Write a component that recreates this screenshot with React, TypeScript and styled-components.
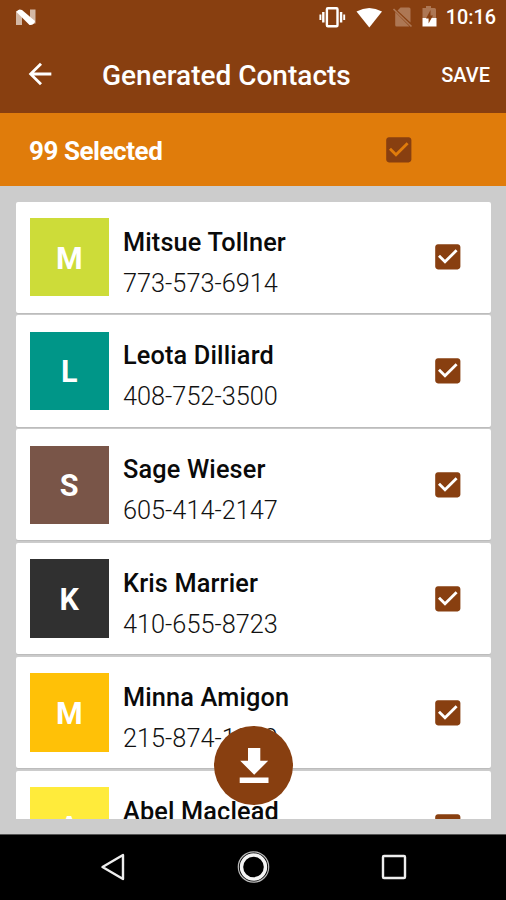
import React from "react";
import styled, { createGlobalStyle } from "styled-components";

const brown = "#883f10";
const faded = "#ad7754";

const GlobalStyle = createGlobalStyle`
  * { box-sizing: border-box; }
  body { margin: 0; background: #000; font-family: Roboto, "Liberation Sans", sans-serif; }
  svg { display: block; flex: none; }
`;

const Screen = styled.div`
  position: relative;
  display: flex;
  flex-direction: column;
  width: 506px;
  height: 900px;
  overflow: hidden;
  background: #ccc;
`;

const StatusBar = styled.div`
  flex: none;
  display: flex;
  align-items: center;
  justify-content: space-between;
  height: 34px;
  padding: 0 10px 0 15px;
  background: ${brown};
`;

const StatusIcons = styled.div`
  display: flex;
  align-items: center;
`;

const Clock = styled.span`
  margin-left: 9px;
  padding-top: 2px;
  font-size: 19.8px;
  line-height: 24px;
  font-weight: 500;
  color: #fff;
`;

const Toolbar = styled.header`
  flex: none;
  display: flex;
  align-items: center;
  height: 79px;
  padding: 0 16px 0 23px;
  background: ${brown};
  color: #fff;
`;

const Title = styled.h1`
  flex: 1;
  margin: 5px 0 0 45px;
  font-size: 28px;
  line-height: 34px;
  font-weight: 500;
  white-space: nowrap;
`;

const SaveButton = styled.button`
  margin: 3px 0 0;
  padding: 0;
  border: 0;
  background: none;
  color: #fff;
  font: 500 20px/24px Roboto, sans-serif;
`;

const SelectionBar = styled.div`
  flex: none;
  display: flex;
  align-items: center;
  justify-content: space-between;
  height: 72.5px;
  padding: 2px 90px 0 29px;
  background: #e07c0b;
`;

const SelectionCount = styled.span`
  padding-top: 2px;
  font-size: 26px;
  line-height: 32px;
  font-weight: 700;
  letter-spacing: -0.45px;
  color: #fff;
`;

const List = styled.main`
  flex: none;
  display: flex;
  flex-direction: column;
  gap: 2.7px;
  height: 617.5px;
  margin: 16px 15px 15px 16px;
  overflow: hidden;
`;

const Card = styled.article`
  flex: none;
  display: flex;
  align-items: center;
  height: 111.2px;
  padding: 0 26.5px 0 14px;
  border-radius: 2px;
  background: #fff;
  box-shadow: 0 1px 1px #bbb;
`;

const Avatar = styled.div<{ $color: string }>`
  display: flex;
  align-items: center;
  justify-content: center;
  width: 78.5px;
  height: 78.5px;
  padding-top: 3px;
  background: ${(p) => p.$color};
  color: #fff;
  font-size: 30.5px;
  line-height: 36px;
  font-weight: 700;
`;

const Details = styled.div`
  flex: 1;
  margin-left: 14.5px;
  padding-top: 11px;
  white-space: nowrap;
`;

const Name = styled.div`
  font-size: 25.3px;
  line-height: 41px;
  font-weight: 500;
  color: #0a0a0a;
  letter-spacing: 0.15px;
`;

const Phone = styled.div`
  font-size: 25.3px;
  line-height: 41px;
  font-weight: 300;
  color: #111;
`;

const Fab = styled.button`
  position: absolute;
  left: 214px;
  top: 726px;
  display: flex;
  align-items: center;
  justify-content: center;
  width: 79px;
  height: 79px;
  padding: 0;
  border: 0;
  border-radius: 50%;
  background: ${brown};
`;

const NavBar = styled.nav`
  flex: 1;
  display: grid;
  grid-template-columns: repeat(3, 140.5px);
  justify-content: center;
  justify-items: center;
  align-items: center;
  padding-bottom: 2px;
  background: #000;
  border-top: 1px solid #555;
`;

const Checkbox = ({ color }: { color: string }) => (
  <svg width="33.6" height="33.6" viewBox="0 0 24 24" fill={color}>
    <path d="M19 3H5c-1.11 0-2 .9-2 2v14c0 1.1.89 2 2 2h14c1.11 0 2-.9 2-2V5c0-1.1-.89-2-2-2zm-9 14l-5-5 1.41-1.41L10 14.17l7.59-7.59L19 8l-9 9z" />
  </svg>
);

const contacts = [
  { name: "Mitsue Tollner", phone: "773-573-6914", color: "#cddc39" },
  { name: "Leota Dilliard", phone: "408-752-3500", color: "#009688" },
  { name: "Sage Wieser", phone: "605-414-2147", color: "#795548" },
  { name: "Kris Marrier", phone: "410-655-8723", color: "#303030" },
  { name: "Minna Amigon", phone: "215-874-1229", color: "#ffc107" },
  { name: "Abel Maclead", phone: "631-335-3414", color: "#ffeb3b" },
];

export default function App() {
  return (
    <Screen>
      <GlobalStyle />
      <StatusBar>
        <svg width="22" height="18" viewBox="0 0 22 18">
          <path d="M1 3h6v14H1zM15 1.500h5.500v14H15z" fill="#d3b7a4" />
          <path d="M1.500 4Q3 .300 7 2L20 13Q19 17.500 14.500 17z" fill="#fff" />
        </svg>
        <StatusIcons>
          <svg width="38" height="24" viewBox="0 0 38 24">
            <rect x="9.900" y="3.300" width="10.600" height="18" rx="1" fill="none" stroke="#fff" strokeWidth="2.400" />
            <path d="M6.300 7v10.500M24.100 7v10.500" stroke="#fff" strokeWidth="2.400" />
            <path d="M3.400 9.500v5.500M27.200 9.500v5.500" stroke="#fff" strokeWidth="1.900" />
          </svg>
          <svg width="28" height="24" viewBox="0 0 28 24">
            <path d="M1.500 6.500Q14.200 -.700 27 6.500L14.300 22.500z" fill="#fff" />
          </svg>
          <svg width="36" height="24" viewBox="0 0 36 24">
            <path d="M17.500 2.500H26Q27.500 2.500 27.500 4V17.500L14.500 5.500zM12.200 7L26.500 21.500H13.500Q12.200 21.500 12.200 20z" fill={faded} />
            <path d="M10.500 4L28.500 21.500" stroke={faded} strokeWidth="1.700" />
          </svg>
          <svg width="18" height="24" viewBox="0 0 18 24">
            <path d="M3.500 3h3.500V1h5v2h3.500Q17 3 17 4.500V13H3.500z" fill={faded} />
            <path d="M3.500 13h14v8.500h-14z" fill="#fff" />
            <path d="M11.500 5L7 13.500h2.600v5L14 10.500h-2.500z" fill={brown} />
          </svg>
          <Clock>10:16</Clock>
        </StatusIcons>
      </StatusBar>
      <Toolbar>
        <svg width="34" height="34" viewBox="0 0 24 24" fill="#fff">
          <path d="M20 11H7.830l5.590-5.590L12 4l-8 8 8 8 1.410-1.410L7.830 13H20v-2z" />
        </svg>
        <Title>Generated Contacts</Title>
        <SaveButton>SAVE</SaveButton>
      </Toolbar>
      <SelectionBar>
        <SelectionCount>99 Selected</SelectionCount>
        <Checkbox color={brown} />
      </SelectionBar>
      <List>
        {contacts.map((c) => (
          <Card key={c.name}>
            <Avatar $color={c.color}>{c.name[0]}</Avatar>
            <Details>
              <Name>{c.name}</Name>
              <Phone>{c.phone}</Phone>
            </Details>
            <Checkbox color={brown} />
          </Card>
        ))}
      </List>
      <NavBar>
        <svg width="34" height="34" viewBox="0 0 34 34">
          <path d="M6.500 17L27 5v24z" fill="none" stroke="#eee" strokeWidth="2.400" strokeLinejoin="round" />
        </svg>
        <svg width="34" height="34" viewBox="0 0 34 34">
          <circle cx="17.500" cy="17" r="15.200" fill="none" stroke="#bbb" strokeWidth="1.200" />
          <circle cx="17.500" cy="17" r="12" fill="none" stroke="#f4f4f4" strokeWidth="3.400" />
        </svg>
        <svg width="34" height="34" viewBox="0 0 34 34">
          <rect x="6" y="6" width="22" height="22" rx="1" fill="none" stroke="#eee" strokeWidth="2.400" />
        </svg>
      </NavBar>
      <Fab aria-label="Download">
        <svg width="48" height="48" viewBox="0 0 48 48" fill="#fff">
          <path d="M18 6h12.300v12.800h7.900L24.200 32.700L10.200 18.800H18zM9.700 35.500h28.800v5.500H9.700z" />
        </svg>
      </Fab>
    </Screen>
  );
}
